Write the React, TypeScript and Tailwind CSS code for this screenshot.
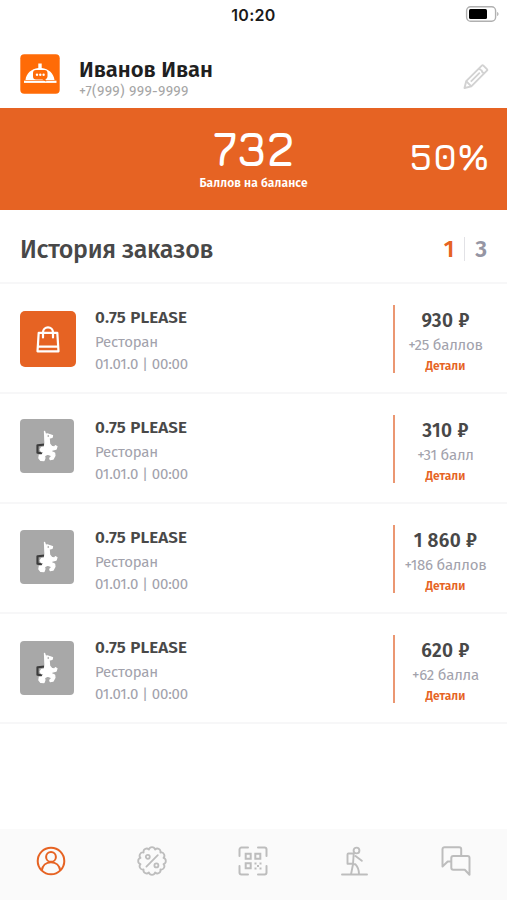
import React from 'react';

const orders = [
    { id: 1, delivery: false, tileClass: 'mt-[27px]', price: '930 ₽', points: '+25 баллов' },
    { id: 2, delivery: true, tileClass: 'mt-[25px]', price: '310 ₽', points: '+31 балл' },
    { id: 3, delivery: true, tileClass: 'mt-[26px]', price: '1 860 ₽', points: '+186 баллов' },
    { id: 4, delivery: true, tileClass: 'mt-[27px]', price: '620 ₽', points: '+62 балла' },
];

function StatusBar() {
    return (
        <div className="h-[30px] grid grid-cols-3 items-center">
            <span />
            <span className="text-center font-['Inter','Liberation_Sans',sans-serif] text-[16px] leading-[30px] font-semibold text-[#1a1a1a] tracking-[0.3px]">
                10:20
            </span>
            <svg className="justify-self-end mr-[8px] mt-[-2px]" width="34" height="18" viewBox="0 0 34 18" fill="none">
                <rect x="1.600" y="1.700" width="29" height="14.600" rx="4" stroke="#b0b0b0" strokeWidth="1.400" />
                <rect x="4" y="4" width="18" height="10" rx="1.500" fill="#000" />
                <path d="M32.200 7v4c1.700-.5 1.700-3.500 0-4z" fill="#aaa" />
            </svg>
        </div>
    );
}

function ClocheLogo() {
    return (
        <svg width="40" height="40" viewBox="0 0 40 40">
            <rect x="0.300" y="0.300" width="39.400" height="39.400" rx="4" fill="#ff6b07" />
            <path d="M18.300 9.500h3.400v4.400c7 .8 12 5.300 12.800 12H5.500c.8-6.700 5.800-11.200 12.800-12z" fill="#fff" />
            <rect x="4" y="26.700" width="32.500" height="2.200" fill="#fff" />
            <path d="M16 16h8.500a3 3 0 0 1 3 3v3.500a3 3 0 0 1-2 2.800l.8 2.400-4-2.200H16a3 3 0 0 1-3-3V19a3 3 0 0 1 3-3z" fill="#ff6b07" />
            <g fill="#fff">
                <circle cx="17" cy="20.700" r="1.200" />
                <circle cx="20.300" cy="20.700" r="1.200" />
                <circle cx="23.600" cy="20.700" r="1.200" />
            </g>
        </svg>
    );
}

function PencilIcon() {
    return (
        <svg width="26" height="26" viewBox="0 0 26 26" fill="none" stroke="#d2d2d2" strokeWidth="1.900" strokeLinejoin="round">
            <path d="M1.500 24l1.700-6.800L18.800 1.600c.6-.6 1-.6 1.600 0l3.500 3.500c.6.6.6 1 0 1.600L8.300 22.300z" />
            <path d="M3.200 17.200l5.100 5.100M7.800 17.700l9-9" />
            <path d="M16.200 4.200c.3 1.700 1.100 2.100 2.400 2.200.1 1.300.8 2.200 2.600 2.900" />
        </svg>
    );
}

function BagIcon() {
    return (
        <svg width="24" height="27" viewBox="0 0 24 27" fill="none" stroke="#fff" strokeWidth="2.200" strokeLinejoin="round" strokeLinecap="round">
            <path d="M2.700 6.800h18.600l1.200 18.500h-21z" />
            <path d="M2.200 20.600h19.600" />
            <path d="M7 11.500V6.400a5 5 0 0 1 10 0v5.100" />
        </svg>
    );
}

function LlamaIcon() {
    return (
        <svg width="24" height="32" viewBox="0 0 24 32" strokeLinejoin="round">
            <path d="M9.500 14.500l-7 .8v7.400l5 .8" fill="none" stroke="#3c3c3c" strokeWidth="2.200" />
            <path
                d="M9.500 1.300l1 2.900 2.500-.2 4.500 1.600-.4 1.800-3 .6.500 6 2.100 2.500 2.800.6 1-1.400 1.400.8-.8 2.600-3.100.9-1.800-.5.200 2.200 3.200 1.500.3 2.400-1.900 3.500-2.800.4-.4-1.400 1.700-1.600-.4-1.100-3.400-1.300-3.200 1.600.4 2.300-.9 2.500-3.300-.1-1.800-2.300.5-3 2.700-.3 2-3.500-2.600.3-1.200-2 1-1.900 3.200-.7.500-4.300z"
                fill="#fff"
                stroke="#fff"
                strokeWidth="1.300"
            />
            <circle cx="13.200" cy="6" r="0.700" fill="#777" />
        </svg>
    );
}

function OrderRow({ order }: { order: (typeof orders)[number] }) {
    return (
        <div className="h-[110px] flex border-b-2 border-[#f7f7f8]">
            <div className="w-[95px] shrink-0 pl-[20px]">
                {order.delivery ? (
                    <div className={`w-[54px] h-[54px] rounded-[4px] bg-[#a8a8a8] flex items-center justify-center ${order.tileClass}`}>
                        <LlamaIcon />
                    </div>
                ) : (
                    <div className={`w-[56px] h-[56px] rounded-[5px] bg-[#e66323] flex items-center justify-center ${order.tileClass}`}>
                        <BagIcon />
                    </div>
                )}
            </div>
            <div className="flex-1 pt-[22px] whitespace-nowrap">
                <div className="text-[17px] leading-[24px] font-semibold text-[#484848] tracking-[0.1px]">0.75 PLEASE</div>
                <div className="text-[15px] leading-[24px] text-[#a2a2ac] tracking-[-0.2px]">Ресторан</div>
                <div className="text-[15px] leading-[20px] text-[#a2a2ac] tracking-[-0.15px]">01.01.0 | 00:00</div>
            </div>
            <div className="mt-[21px] h-[68px] w-[2px] bg-[#eb9772]" />
            <div className="w-[112px] pr-[11px] pt-[24px] text-center whitespace-nowrap">
                <div className="text-[19px] leading-[26px] font-semibold text-[#484848] tracking-[0.3px]">{order.price}</div>
                <div className="text-[15px] leading-[22px] text-[#a2a2ac] tracking-[-0.2px]">{order.points}</div>
                <div className="text-[12px] leading-[20px] font-semibold text-[#e66323] tracking-[0.1px]">Детали</div>
            </div>
        </div>
    );
}

function ProfileIcon() {
    return (
        <svg width="30" height="30" viewBox="0 0 30 30" fill="none" stroke="#e66323" strokeWidth="2">
            <circle cx="15" cy="15" r="13.300" />
            <circle cx="15" cy="10.900" r="4.900" />
            <path d="M5.700 24.500c.8-5 4.400-8.300 9.300-8.300s8.500 3.300 9.300 8.300" />
        </svg>
    );
}

// Twelve arcs around the centre make the scalloped edge of the badge
const badgePath =
    Array.from({ length: 13 }, (_, i) => {
        const angle = ((i * 30 - 15) * Math.PI) / 180;
        const x = (15 + 11.9 * Math.cos(angle)).toFixed(2);
        const y = (15 + 11.9 * Math.sin(angle)).toFixed(2);
        return i === 0 ? `M${x} ${y}` : `A3.2 3.2 0 0 1 ${x} ${y}`;
    }).join('') + 'z';

function DiscountIcon() {
    return (
        <svg width="30" height="30" viewBox="0 0 30 30" fill="none" stroke="#bdbdbd" strokeWidth="1.800" strokeLinecap="round" strokeLinejoin="round">
            <path d={badgePath} />
            <circle cx="10.800" cy="10.800" r="2" />
            <circle cx="19.400" cy="19.400" r="2" />
            <path d="M20.800 9.200L9.400 20.600" />
        </svg>
    );
}

function QrIcon() {
    return (
        <svg width="30" height="30" viewBox="0 0 30 30" fill="none" stroke="#bdbdbd" strokeWidth="2" strokeLinecap="round" strokeLinejoin="round">
            <path d="M1.500 10V3.500a2 2 0 0 1 2-2H10M20 1.500h6.500a2 2 0 0 1 2 2V10M28.500 20v6.500a2 2 0 0 1-2 2H20M10 28.500H3.500a2 2 0 0 1-2-2V20" />
            <path d="M7.700 7.700h5v5h-5zM17.300 7.700h5v5h-5zM7.700 17.300h5v5h-5z" strokeLinejoin="miter" />
            <path d="M16.500 16.500h2v2h-2zM21.500 16.500h2v2h-2zM19 19h2v2h-2zM16.500 21.500h2v2h-2zM21.500 21.500h2v2h-2z" fill="#bdbdbd" stroke="none" />
        </svg>
    );
}

function WalkerIcon() {
    return (
        <svg width="27" height="30" viewBox="0 0 27 30" fill="none" stroke="#bdbdbd" strokeWidth="1.900" strokeLinecap="round" strokeLinejoin="round">
            <circle cx="15.500" cy="4.500" r="2.900" />
            <path d="M12.500 7.500H7.500a1 1 0 0 0-1 1v9.300h5.300" />
            <path d="M12.700 7.800l-.7 10.500-1.900 9.700M14.500 10l6.300 4.800M12 18.300h2.500c2.600 2.800 3.500 5.700 3.500 9.700" />
            <path d="M1 28.500h25" />
        </svg>
    );
}

function ChatIcon() {
    return (
        <svg width="30" height="30" viewBox="0 0 30 30" fill="none" stroke="#bdbdbd" strokeWidth="2" strokeLinejoin="round">
            <path d="M20.200 10V3.200a2 2 0 0 0-2-2H3.500a2 2 0 0 0-2 2v17.300l5.200-5h3.600" />
            <path d="M12.300 10.100h14.200a2 2 0 0 1 2 2v16.600l-4.700-5H12.300a2 2 0 0 1-2-2v-9.600a2 2 0 0 1 2-2z" />
        </svg>
    );
}

export default function App() {
    return (
        <div className="w-full h-screen bg-white flex flex-col overflow-hidden font-['Fira_Sans','Noto_Sans',sans-serif]">
            <StatusBar />

            {/* Profile header */}
            <header className="h-[78px] flex px-[20px] pt-[24px]">
                <ClocheLogo />
                <div className="ml-[19px] flex-1 pt-[1px] whitespace-nowrap">
                    <h1 className="text-[22px] leading-[30px] font-semibold text-[#1f1f1f]">Иванов Иван</h1>
                    <p className="text-[14px] leading-[14px] text-[#a5a5a5] tracking-[0.35px]">+7(999) 999-9999</p>
                </div>
                <div className="mt-[10px] mr-[-2px]">
                    <PencilIcon />
                </div>
            </header>

            {/* Balance */}
            <section className="h-[102px] bg-[#e66323] text-white grid grid-cols-[1fr_auto_1fr]">
                <span />
                <div className="text-center pt-[18px]">
                    <div className="font-['Jura','DejaVu_Sans_Mono',monospace] font-bold text-[47px] leading-[45px]">732</div>
                    <div className="mt-[2px] text-[12px] leading-[20px] font-semibold tracking-[0.1px]">Баллов на балансе</div>
                </div>
                <div className="justify-self-end mr-[18px] pt-[29px] font-['Jura','DejaVu_Sans_Mono',monospace] font-bold text-[36px] leading-[40px]">
                    50%
                </div>
            </section>

            {/* Order history */}
            <section>
                <div className="h-[74px] border-b-2 border-[#f7f7f8] px-[20px] flex items-center">
                    <h2 className="flex-1 pt-[7px] text-[25px] leading-[34px] font-medium text-[#484848] tracking-[-0.3px]">История заказов</h2>
                    <div className="flex items-center pt-[5px] text-[23px] leading-[24px] font-semibold">
                        <span className="text-[#e66323]">1</span>
                        <span className="mx-[10px] h-[24px] w-px bg-[#e2e2e6]" />
                        <span className="text-[#9595a3]">3</span>
                    </div>
                </div>
                {orders.map((order) => (
                    <OrderRow key={order.id} order={order} />
                ))}
            </section>

            {/* Tab bar */}
            <nav className="mt-auto h-[71px] bg-[#fafafa] grid grid-cols-5 justify-items-center pt-[17px]">
                <ProfileIcon />
                <DiscountIcon />
                <QrIcon />
                <WalkerIcon />
                <ChatIcon />
            </nav>
        </div>
    );
}
